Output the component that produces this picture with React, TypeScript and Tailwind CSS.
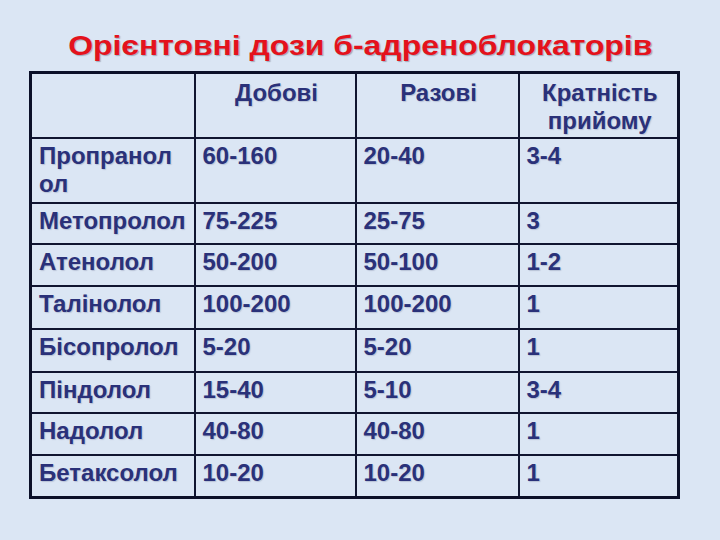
const rows: { name: string[]; daily: string; single: string; freq: string; h: string }[] = [
  { name: ['Пропранол', 'ол'], daily: '60-160', single: '20-40', freq: '3-4', h: 'h-[65px]' },
  { name: ['Метопролол'], daily: '75-225', single: '25-75', freq: '3', h: 'h-[41px]' },
  { name: ['Атенолол'], daily: '50-200', single: '50-100', freq: '1-2', h: 'h-[42px]' },
  { name: ['Талінолол'], daily: '100-200', single: '100-200', freq: '1', h: 'h-[43px]' },
  { name: ['Бісопролол'], daily: '5-20', single: '5-20', freq: '1', h: 'h-[43px]' },
  { name: ['Піндолол'], daily: '15-40', single: '5-10', freq: '3-4', h: 'h-[41px]' },
  { name: ['Надолол'], daily: '40-80', single: '40-80', freq: '1', h: 'h-[42px]' },
  { name: ['Бетаксолол'], daily: '10-20', single: '10-20', freq: '1', h: 'h-[43px]' },
];

const cell = 'border-2 border-[#101530] align-top pt-[3px] pl-[7px] pr-1';

export default function App() {
  return (
    <div className="w-[720px] h-[540px] overflow-hidden bg-[#dbe6f4] font-['Liberation_Sans',Arial,sans-serif] font-bold">
      <div className="pt-[30px] flex justify-center">
        <h1 className="inline-block scale-x-[1.14] text-[28px] leading-[32px] text-[#e4121c] [text-shadow:1px_1px_1px_rgba(90,90,110,0.45)]">
          Орієнтовні дози б-адреноблокаторів
        </h1>
      </div>
      <div className="pl-[29px] pt-[9px]">
        <table className="table-fixed border-collapse border-[3px] border-[#0b1028] w-[648px] text-[24px] leading-[28px] text-[#2a3179] [text-shadow:1px_1px_1px_rgba(120,130,160,0.35)]">
          <colgroup>
            <col className="w-[164px]" />
            <col className="w-[161px]" />
            <col className="w-[163px]" />
            <col className="w-[160px]" />
          </colgroup>
          <thead>
            <tr className="h-[65px]">
              <th className={cell}></th>
              <th className={`${cell} font-bold text-center pt-[5px]`}>Добові</th>
              <th className={`${cell} font-bold text-center pt-[5px]`}>Разові</th>
              <th className={`${cell} font-bold text-center pt-[5px]`}>
                Кратність
                <br />
                прийому
              </th>
            </tr>
          </thead>
          <tbody>
            {rows.map((r) => (
              <tr key={r.daily + r.name[0]} className={r.h}>
                <td className={cell}>
                  {r.name.map((n, i) => (
                    <div key={i}>{n}</div>
                  ))}
                </td>
                <td className={cell}>{r.daily}</td>
                <td className={cell}>{r.single}</td>
                <td className={cell}>{r.freq}</td>
              </tr>
            ))}
          </tbody>
        </table>
      </div>
    </div>
  );
}
